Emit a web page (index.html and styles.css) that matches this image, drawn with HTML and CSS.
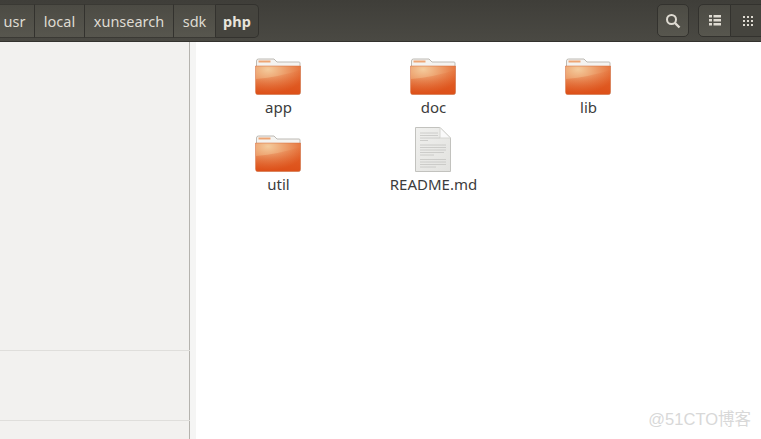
FILE: index.html
```html
<!DOCTYPE html>
<html lang="en">
<head>
    <meta charset="UTF-8">
    <title>php</title>
    <link rel="stylesheet" href="styles.css">
</head>
<body>
    <svg class="defs" width="0" height="0">
        <defs>
            <radialGradient id="folderFront" cx="0.28" cy="0.12" r="0.85">
                <stop offset="0" stop-color="#f4cb9c"/>
                <stop offset="0.5" stop-color="#ec9a66"/>
                <stop offset="1" stop-color="#e4682f"/>
            </radialGradient>
            <linearGradient id="folderShade" x1="0" y1="0" x2="0" y2="1">
                <stop offset="0" stop-color="#d8400a" stop-opacity="0.03"/>
                <stop offset="1" stop-color="#d8400a" stop-opacity="0.6"/>
            </linearGradient>
            <symbol id="folder" viewBox="0 0 46 37">
                <path d="M1.500 36V3Q1.500 1 3.500 1H19L22 4H44Q45 4 45 5V36Z" fill="#f4f3f0" stroke="#bdbab4"/>
                <rect x="3.500" y="2.500" width="12" height="2" fill="#eda574"/>
                <path d="M.5 8H45.500V34Q45.500 36.500 43.500 36.500H2.500Q.5 36.500 .5 34Z" fill="url(#folderFront)" stroke="#d4683a" stroke-width="0.5"/>
                <path d="M1 21Q24 19 45 12V35Q45 36 43 36H3Q1 36 1 35Z" fill="url(#folderShade)"/>
            </symbol>
            <linearGradient id="docPaper" x1="0" y1="0" x2="1" y2="1">
                <stop offset="0" stop-color="#f0f0ee"/>
                <stop offset="1" stop-color="#e2e2df"/>
            </linearGradient>
        </defs>
    </svg>

    <header class="toolbar">
        <nav class="pathbar">
            <span class="crumb crumb-first">usr</span>
            <span class="crumb crumb-local">local</span>
            <span class="crumb crumb-xun">xunsearch</span>
            <span class="crumb crumb-sdk">sdk</span>
            <span class="crumb crumb-current">php</span>
        </nav>
        <div class="tools">
            <button class="tool tool-search">
                <svg width="16" height="16" viewBox="0 0 16 16"><circle cx="6.500" cy="6.500" r="4.500" fill="none" stroke="#dfdbd2" stroke-width="2"/><path d="M10 10l4.500 4.500" stroke="#dfdbd2" stroke-width="2.400"/></svg>
            </button>
            <div class="view-group">
                <button class="tool tool-list">
                    <svg width="12" height="11" viewBox="0 0 12 11" fill="#dfdbd2"><rect width="3" height="2.500"/><rect x="4.500" width="7.500" height="2.500"/><rect y="4" width="3" height="2.500"/><rect x="4.500" y="4" width="7.500" height="2.500"/><rect y="8" width="3" height="2.500"/><rect x="4.500" y="8" width="7.500" height="2.500"/></svg>
                </button>
                <button class="tool tool-grid">
                    <svg width="10" height="10" viewBox="0 0 10 10" fill="#dfdbd2"><rect width="2" height="2"/><rect x="4" width="2" height="2"/><rect x="8" width="2" height="2"/><rect y="4" width="2" height="2"/><rect x="4" y="4" width="2" height="2"/><rect x="8" y="4" width="2" height="2"/><rect y="8" width="2" height="2"/><rect x="4" y="8" width="2" height="2"/><rect x="8" y="8" width="2" height="2"/></svg>
                </button>
            </div>
        </div>
    </header>

    <div class="content">
        <aside class="sidebar">
            <div class="side-block side-top"></div>
            <div class="side-block side-mid"></div>
            <div class="side-block"></div>
        </aside>
        <main class="files">
            <div class="file">
                <svg class="folder-icon"><use href="#folder"/></svg>
                <span>app</span>
            </div>
            <div class="file">
                <svg class="folder-icon"><use href="#folder"/></svg>
                <span>doc</span>
            </div>
            <div class="file">
                <svg class="folder-icon"><use href="#folder"/></svg>
                <span>lib</span>
            </div>
            <div class="file">
                <svg class="folder-icon"><use href="#folder"/></svg>
                <span>util</span>
            </div>
            <div class="file file-doc">
                <svg class="doc-icon" width="38" height="45" viewBox="0 0 38 45">
                    <path d="M1.500 .5H26L36.500 11V44.500H1.500Z" fill="url(#docPaper)" stroke="#c2c2be"/>
                    <path d="M26 .5V11H36.500Z" fill="#fafafa" stroke="#d6d6d2"/>
                    <path d="M6 6H24M6 8.500H24M6 11H26M6 13.500H14M6 18H32M6 20.500H32M6 23H32M6 25.500H30M6 28H20M6 32.500H32M6 35H32M6 37.500H32M6 40H22" stroke="#c4c4c1" stroke-width="0.8"/>
                </svg>
                <span>README.md</span>
            </div>
        </main>
    </div>

    <div class="watermark">@51CTO博客</div>
</body>
</html>
```

FILE: styles.css
```css
html, body {
    margin: 0;
    padding: 0;
    height: 100%;
    overflow: hidden;
}

body {
    display: flex;
    flex-direction: column;
    font-family: 'Noto Sans', 'Noto Sans CJK SC', sans-serif;
    background-color: #fff;
}

.defs {
    position: absolute;
}

.toolbar {
    flex: 0 0 42px;
    box-sizing: border-box;
    display: flex;
    justify-content: space-between;
    padding: 4px 0 0;
    background: linear-gradient(to bottom, #3f3e39, #4a4943);
    border-bottom: 1px solid #33322e;
}

.pathbar {
    display: flex;
    height: 34px;
}

.crumb {
    box-sizing: border-box;
    display: flex;
    align-items: center;
    justify-content: center;
    color: #dfdbd2;
    font-size: 14.500px;
    background: linear-gradient(to bottom, #4c4b44, #57564e);
    border-right: 1px solid #33322e;
    border-top: 1px solid #3a3934;
    border-bottom: 1px solid #3a3934;
}

.crumb-first {
    width: 35px;
    padding-right: 5px;
}

.crumb-local { width: 50px; }
.crumb-xun { width: 89px; }
.crumb-sdk { width: 42px; }

.crumb-current {
    width: 43px;
    font-weight: bold;
    color: #e8e4dc;
    background: #45443e;
    border: 1px solid #33322e;
    border-left: none;
    border-radius: 0 5px 5px 0;
}

.tools {
    display: flex;
    gap: 9px;
    height: 33px;
}

.tool {
    box-sizing: border-box;
    display: flex;
    align-items: center;
    justify-content: center;
    height: 33px;
    padding: 0;
    border: 1px solid #33322e;
    background: linear-gradient(to bottom, #4c4b44, #57564e);
}

.tool-search {
    width: 32px;
    border-radius: 5px;
}

.view-group {
    display: flex;
}

.tool-list {
    width: 33px;
    border-radius: 5px 0 0 5px;
}

.tool-grid {
    width: 30px;
    padding-left: 4px;
    border-left: none;
    border-right: none;
    background: #45443e;
}

.content {
    flex: 1;
    display: flex;
    min-height: 0;
}

.sidebar {
    box-sizing: border-box;
    flex: 0 0 196px;
    display: flex;
    flex-direction: column;
    background-color: #f2f1ef;
    border-right: 6px solid #f5f5f4;
    box-shadow: inset -1px 0 0 #b5b3ae;
}

.side-block {
    flex: 1;
    border-bottom: 1px solid #dfdedb;
}

.side-top {
    flex: 0 0 308px;
}

.side-mid {
    flex: 0 0 69px;
}

.side-block:last-child {
    border-bottom: none;
}

.files {
    flex: 1;
    display: grid;
    grid-template-columns: repeat(3, 155px);
    grid-auto-rows: 77px;
    padding: 16px 0 0 5px;
}

.file {
    display: flex;
    flex-direction: column;
    align-items: center;
    color: #3c3c3c;
    font-size: 15px;
    line-height: 20px;
}

.folder-icon {
    width: 46px;
    height: 37px;
    margin: 0 2px 2px 0;
}

.file-doc {
    margin-top: -8px;
}

.doc-icon {
    display: block;
    margin: 0 2px 2px 0;
}

.watermark {
    position: absolute;
    right: 10px;
    bottom: 9px;
    font-family: 'Liberation Sans', 'Noto Sans CJK SC', sans-serif;
    font-size: 16.500px;
    color: #d8d8d8;
}
```
